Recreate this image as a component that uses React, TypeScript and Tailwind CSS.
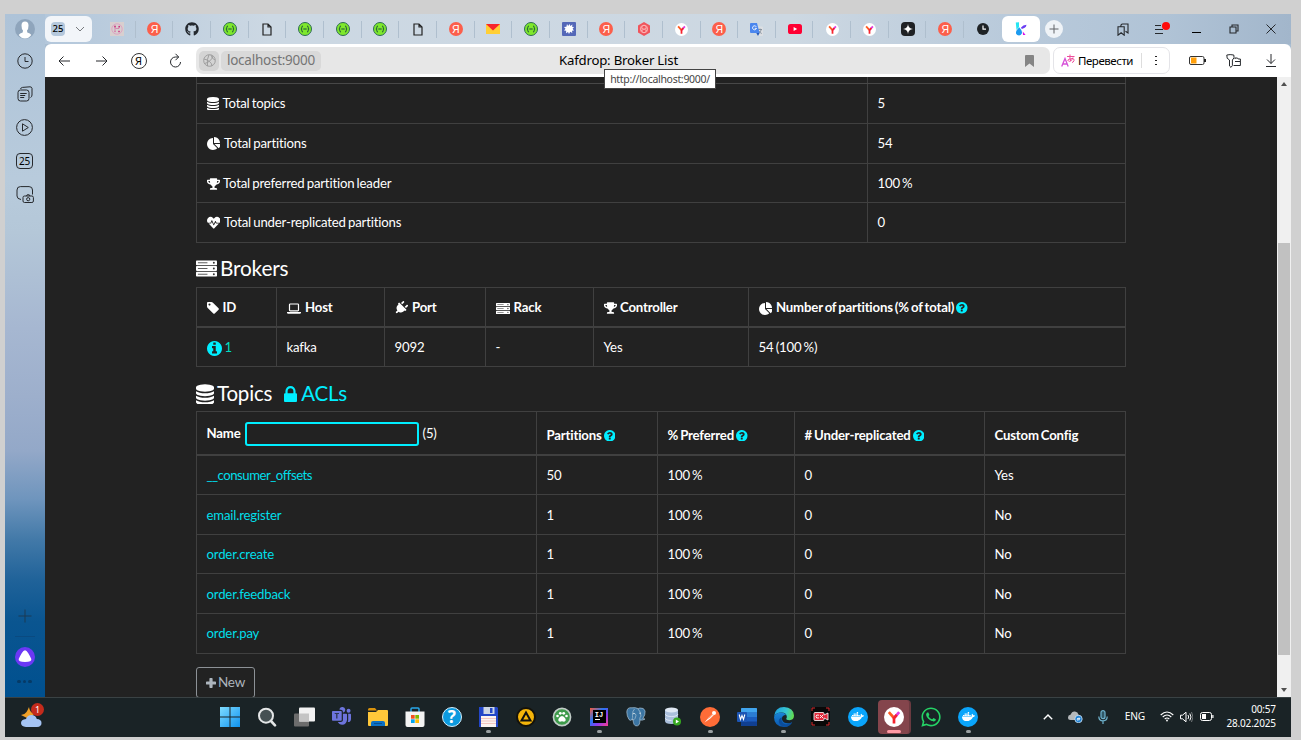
import React from "react";
import { FaGithub, FaWhatsapp, FaDocker, FaTrophy, FaHeartbeat, FaPlug } from "react-icons/fa";
import { BsMicrosoftTeams } from "react-icons/bs";

type Kids = { children?: React.ReactNode };

/* ---------- glyphs used inside the page ---------- */

const Glyph = ({ d, box, cls }: { d: string; box: string; cls: string }) => (
  <svg viewBox={box} className={`inline-block shrink-0 fill-current ${cls}`}>
    <path d={d} />
  </svg>
);

const DB =
  "M768 768q237 0 443-43t325-127v170q0 69-103 128t-280 93.5-385 34.5-385-34.5-280-93.5-103-128v-170q119 84 325 127t443 43zM768 1536q237 0 443-43t325-127v170q0 69-103 128t-280 93.5-385 34.5-385-34.5-280-93.5-103-128v-170q119 84 325 127t443 43zM768 1152q237 0 443-43t325-127v170q0 69-103 128t-280 93.5-385 34.5-385-34.5-280-93.5-103-128v-170q119 84 325 127t443 43zM768 0q208 0 385 34.5t280 93.5 103 128v128q0 69-103 128t-280 93.5-385 34.5-385-34.5-280-93.5-103-128v-128q0-69 103-128t280-93.5 385-34.5z";
const PIE =
  "M768 890l546 546q-106 108-247.5 168t-298.5 60q-209 0-385.5-103t-279.5-279.5-103-385.5 103-385.5 279.5-279.5 385.5-103v762zM955 896h773q0 157-60 298.5t-168 247.5zM1664 768h-768v-768q209 0 385.5 103t279.5 279.5 103 385.5z";
const TAG =
  "M448 448q0-53-37.5-90.5t-90.5-37.5-90.5 37.5-37.5 90.5 37.5 90.5 90.5 37.5 90.5-37.5 37.5-90.5zM1515 1024q0 53-37 90l-491 492q-39 37-91 37-53 0-90-37l-715-716q-38-37-64.5-101t-26.5-117v-416q0-52 38-90t90-38h416q53 0 117 26.5t102 64.5l715 714q37 39 37 91z";
const INFO =
  "M1024 1376v-160q0-14-9-23t-23-9h-96v-512q0-14-9-23t-23-9h-320q-14 0-23 9t-9 23v160q0 14 9 23t23 9h96v320h-96q-14 0-23 9t-9 23v160q0 14 9 23t23 9h448q14 0 23-9t9-23zM896 480v-160q0-14-9-23t-23-9h-192q-14 0-23 9t-9 23v160q0 14 9 23t23 9h192q14 0 23-9t9-23zM1536 896q0 209-103 385.5t-279.5 279.5-385.5 103-385.5-103-279.5-279.5-103-385.5 103-385.5 279.5-279.5 385.5-103 385.5 103 279.5 279.5 103 385.5z";
const QUESTION =
  "M896 1376v-192q0-14-9-23t-23-9h-192q-14 0-23 9t-9 23v192q0 14 9 23t23 9h192q14 0 23-9t9-23zM1152 704q0-88-55.5-163t-138.5-116-170-41q-243 0-371 213-15 24 8 42l132 100q7 6 19 6 16 0 25-12 53-68 86-92 34-24 86-24 48 0 85.5 26t37.5 59q0 38-20 61t-68 45q-63 28-115.5 86.5t-52.5 125.5v36q0 14 9 23t23 9h192q14 0 23-9t9-23q0-19 21.5-49.5t54.5-49.5q32-18 49-28.5t46-35 44.5-48 28-60.5 12.5-81zM1536 896q0 209-103 385.5t-279.5 279.5-385.5 103-385.5-103-279.5-279.5-103-385.5 103-385.5 279.5-279.5 385.5-103 385.5 103 279.5 279.5 103 385.5z";
const LOCK =
  "M320 768h512v-192q0-106-75-181t-181-75-181 75-75 181v192zM1152 864v576q0 40-28 68t-68 28h-960q-40 0-68-28t-28-68v-576q0-40 28-68t68-28h32v-192q0-184 132-316t316-132 316 132 132 316v192h32q40 0 68 28t28 68z";

const Database = ({ cls }: { cls: string }) => <Glyph d={DB} box="0 0 1536 1664" cls={cls} />;
const Pie = () => <Glyph d={PIE} box="0 0 1728 1664" cls="w-[13.5px] h-[13px]" />;
const Server = ({ cls }: { cls: string }) => (
  <svg viewBox="0 0 22 17" className={`shrink-0 ${cls}`}>
    {[0, 6, 12].map((y) => (
      <g key={y}>
        <rect x="0" y={y} width="22" height="5" rx="0.8" fill="#fff" />
        <rect x="2" y={y + 2} width="10" height="1" fill="#555" />
        <circle cx="18.7" cy={y + 2.5} r="1" fill="#333" />
      </g>
    ))}
  </svg>
);
const Laptop = () => (
  <svg viewBox="0 0 14 11" className="h-[11px] w-[14px] shrink-0">
    <rect x="2.5" y="1" width="9" height="6.8" rx="0.8" fill="none" stroke="#fff" strokeWidth="1.2" />
    <path d="M0 9h14v.8q-.2.9-1.2.9H1.2Q.2 10.700 0 9.800z" fill="#fff" />
  </svg>
);
const Help = () => <Glyph d={QUESTION} box="0 128 1536 1536" cls="w-[11.5px] h-[11.5px] text-[#00eeff]" />;

/* ---------- tab favicons ---------- */

const Ya = () => (
  <span className="flex size-[14px] items-center justify-center rounded-full bg-[#fc5f4b] font-['Liberation_Sans'] text-[10.5px] leading-none text-white">
    Я
  </span>
);
const Swagger = () => (
  <svg viewBox="0 0 14 14" className="size-[14px]">
    <circle cx="7" cy="7" r="6.500" fill="#7ee82c" stroke="#2f6a56" />
    <path d="M5 4q-1.200 0-1.200 1.200v.8q0 1-.9 1 .9 0 .9 1v.8Q3.800 10 5 10M9 4q1.200 0 1.200 1.200v.8q0 1 .9 1-.9 0-.9 1v.8Q10.200 10 9 10M5.300 7h3.400" fill="none" stroke="#1c4f3b" strokeWidth="1" />
  </svg>
);
const Doc = () => (
  <svg viewBox="0 0 10 13" className="h-[13px] w-[10px]">
    <path d="M1 1h5l3 3v8H1zM6 1v3h3" fill="none" stroke="#222" strokeWidth="1.200" />
  </svg>
);
const YBrowser = ({ cls }: { cls: string }) => (
  <svg viewBox="0 0 20 20" className={cls}>
    <circle cx="10" cy="10" r="10" fill="#fff" />
    <path d="M4.800 5.200L10 11" stroke="#ff5a1f" strokeWidth="2.700" fill="none" />
    <path d="M15.200 5.200L10 11" stroke="#e23be0" strokeWidth="2.700" fill="none" />
    <path d="M12.800 7.900L10 11v5.500" stroke="#f5232d" strokeWidth="2.700" fill="none" />
  </svg>
);
const Mail = () => (
  <svg viewBox="0 0 14 10" className="h-[10px] w-[14px]">
    <rect width="14" height="10" fill="#ffcf35" />
    <path d="M0 0h14L7 6.500z" fill="#f8252b" />
  </svg>
);
const Spark = () => (
  <svg viewBox="0 0 14 14" className="size-[14px]">
    <rect width="14" height="14" rx="1" fill="#5468b8" />
    <path d="M5 2l1.200 2L7.500 2l.8 2 2.200-1.500-.5 2.300 2 .2-1.400 1.700L12 8.500l-2 .2.300 2.300-2.100-1.200L7 12l-1-2.100-2 1.300.2-2.400L2 8.500l1.500-1.700L2 5l2.400-.2z" fill="#fff" />
  </svg>
);
const Hex = () => (
  <svg viewBox="0 0 14 14" className="size-[14px]">
    <path d="M7 0l6 3.500v7L7 14l-6-3.500v-7z" fill="#f0555c" />
    <path d="M7 3.200a2 2 0 012 2v3.600a2 2 0 01-4 0V5.200a2 2 0 012-2zM3.800 5.500l6.400 3.400M10.200 5.500L3.800 8.900" fill="none" stroke="#ffc4c4" strokeWidth=".6" />
    <circle cx="7" cy="7" r="3.700" fill="none" stroke="#ffc4c4" strokeWidth=".7" />
  </svg>
);
const Translate = () => (
  <svg viewBox="0 0 13 13" className="size-[13px]">
    <path d="M4.500 3.500H12q1 0 1 1V12q0 1-1 1H8z" fill="#dcdfe3" />
    <path d="M8 6.500h4M10 5.500v1M11.300 6.500q-.5 2.500-3 4M9 8q1 2 2.800 2.500" stroke="#7b8794" strokeWidth=".8" fill="none" />
    <path d="M1 0h6l2.600 10H1Q0 10 0 9V1q0-1 1-1z" fill="#4a86ee" />
    <path d="M8 13l1.600-3H6.300z" fill="#2459b8" />
    <path d="M6.300 3.800A2 2 0 106.500 5.300H4.700" stroke="#fff" strokeWidth=".9" fill="none" />
  </svg>
);
const YouTube = () => (
  <svg viewBox="0 0 14 10" className="h-[10px] w-[14px]">
    <rect width="14" height="10" rx="2.600" fill="#ff0033" />
    <path d="M5.600 2.900v4.200L9.200 5z" fill="#fff" />
  </svg>
);
const Star = () => (
  <svg viewBox="0 0 14 14" className="size-[14px]">
    <rect width="14" height="14" rx="4" fill="#1f2124" />
    <path d="M7 2q.3 4.700 5 5-4.700.3-5 5-.3-4.700-5-5 4.700-.3 5-5z" fill="#fff" />
  </svg>
);
const ClockTab = () => (
  <svg viewBox="0 0 12 12" className="size-[12px]">
    <circle cx="6" cy="6" r="6" fill="#1f2326" />
    <path d="M6 2.500V6.200h3" stroke="#fff" strokeWidth="1.200" fill="none" />
  </svg>
);
const Board = () => (
  <svg viewBox="0 0 14 14" className="size-[14px]">
    <rect width="14" height="14" fill="#d8cfcf" />
    <circle cx="7" cy="7" r="5.200" fill="none" stroke="#e090bd" strokeWidth=".7" />
    <path d="M5 4.500v5M5.500 6.500h3.500V5M9 8.500v2" stroke="#d66aa4" strokeWidth=".7" fill="none" />
    <circle cx="5" cy="4.500" r=".9" fill="#c9347f" />
    <circle cx="9.200" cy="4.600" r=".9" fill="#c9347f" />
    <circle cx="5" cy="9.500" r=".7" fill="#d66aa4" />
    <circle cx="9" cy="9.500" r=".8" fill="#c9347f" />
  </svg>
);
const Kafdrop = () => (
  <svg viewBox="0 0 12 14" className="h-[14px] w-[12px]">
    <path d="M.8.500L4 .2 4 5 1.500 8z" fill="#27e6f2" />
    <path d="M4.200 5.200q3.600 3.800 2.600 6.300-.8 1.900-2.800 1.900T1.100 11.400Q.4 9 4.200 5.200z" fill="#1c9bf0" />
    <path d="M11.500 2.800Q11 6 6.800 7L6 5.400Q8 2.900 11.500 2.800z" fill="#6a3df2" />
    <path d="M7.800 9.500l2.800 3.500H8z" fill="#d814e8" />
  </svg>
);

const GH = () => <FaGithub className="size-[14px] text-[#24292f]" />;
const YTab = () => <YBrowser cls="size-[13px]" />;
const tabs = [
  Board, Ya, GH, Swagger, Doc, Swagger, Swagger, Swagger, Doc, Ya, Mail, Swagger, Spark, Ya, Hex, YTab, Ya,
  Translate, YouTube, YTab, YTab, Star, Ya, ClockTab,
];

/* ---------- line icons ---------- */

const Line = ({ box, cls, children, w = "1" }: Kids & { box: string; cls: string; w?: string }) => (
  <svg viewBox={box} className={`shrink-0 ${cls}`} fill="none" stroke="#26292d" strokeWidth={w}>
    {children}
  </svg>
);

const Sidebar = () => (
  <aside className="flex h-[683px] w-10 shrink-0 flex-col items-center bg-[linear-gradient(to_bottom,#aec3d8_0%,#b8cbdc_24%,#b4c7d8_32%,#a6b7d1_46%,#9dafcc_56%,#93a8c8_64%,#6f95bd_71%,#4279a8_77%,#1f6299_83%,#0a5590_89%,#00508f_100%)] pr-px">
    <div className="flex h-[30px] items-center">
      <svg viewBox="0 0 20 20" className="size-5">
        <circle cx="10" cy="10" r="10" fill="#8fa5bc" />
        <path d="M10 2.500q3.500 0 3.500 4 0 3.500-1.500 5l.3 2q3 .8 4 2.500Q13.500 19.500 10 19.500T3.700 16q1-1.700 4-2.500l.3-2q-1.500-1.500-1.500-5 0-4 3.500-4z" fill="#fff" />
      </svg>
    </div>
    <div className="flex flex-col items-center">
      <div className="flex h-[33.4px] items-center">
        <Line box="0 0 16 16" cls="size-4">
          <circle cx="8" cy="8" r="7.200" />
          <path d="M8 4v4.500h3.500" />
        </Line>
      </div>
      <div className="flex h-[33.4px] items-center">
        <Line box="0 0 16 16" cls="size-4">
          <rect x="1" y="4" width="11" height="11" rx="2.500" />
          <path d="M3.200 7.500h6.500M3.200 9.500h5M3.200 11.500h4M3.500 3Q4 1.500 5.500 1.400L13 .8q1.700 0 2 1.500L15 9q-.1 2-1.500 2.500" />
        </Line>
      </div>
      <div className="flex h-[33.4px] items-center">
        <Line box="0 0 17 17" cls="size-[17px]">
          <circle cx="8.500" cy="8.500" r="7.900" />
          <path d="M6.500 4.800v7.400l5.800-3.700z" />
        </Line>
      </div>
      <div className="flex h-[33.4px] items-center">
        <span className="flex h-[15.5px] w-[17px] items-center justify-center rounded-[4px] border border-[#26292d] font-['Noto_Sans'] text-[10px] leading-none tracking-tight text-black">
          25
        </span>
      </div>
      <div className="flex h-[33.4px] items-center">
        <Line box="0 0 18 17" cls="h-[17px] w-[18px]">
          <path d="M5 13.500Q1 13 1 10V4q0-3.400 3.400-3.400h8.700q3.400 0 3.400 3.400v4.500" />
          <rect x="7" y="10" width="10.400" height="6.500" rx="1.500" />
          <path d="M10.500 10l.6-1.200h2.200l.6 1.200" />
          <circle cx="12.200" cy="13.200" r="1.600" />
        </Line>
      </div>
    </div>
    <div className="mt-auto flex flex-col items-center pb-[14px]">
      <Line box="0 0 14 14" cls="size-[14px] opacity-60">
        <path d="M7 .5v13M.5 7h13" />
      </Line>
      <span className="mt-[13px] h-px w-5 bg-[#0a4a80]" />
      <svg viewBox="0 0 20 20" className="mt-[10px] size-5">
        <circle cx="10" cy="10" r="10" fill="#6b38f5" />
        <path d="M10 3.200q1.500 0 3.300 3t3 5.700q.8 3-6.300 3t-6.300-3Q4.900 9.200 6.700 6.200t3.300-3z" fill="#fff" />
      </svg>
      <span className="mt-[13px] flex gap-[2px]">
        {[0, 1, 2].map((i) => (
          <i key={i} className="size-[3.500px] rounded-full bg-[#063a66]" />
        ))}
      </span>
    </div>
  </aside>
);

const TabStrip = () => (
  <div className="flex h-[30px] items-center bg-[linear-gradient(to_right,#b3c7db_0%,#ccd8e3_18%,#cdd8e2_60%,#b9cadb_77%,#b0c3d6_90%,#a2b6cb_100%)]">
    <div className="flex h-[26px] w-[47px] items-center rounded-[6px] bg-[#f2f5f9] pl-[6px]">
      <span className="flex size-[14px] items-center justify-center rounded-[4px] bg-[#b5c8dc] font-['Noto_Sans'] text-[9.500px] leading-none font-medium text-black">25</span>
      <Line box="0 0 10 6" cls="ml-[10px] h-[6px] w-[10px] opacity-60">
        <path d="M1 1l4 4 4-4" />
      </Line>
    </div>
    <div className="ml-[6px] flex">
      {tabs.map((Icon, i) => (
        <div key={i} className="relative flex h-[17px] w-[37.660px] items-center justify-center">
          <Icon />
          {i < 23 && <span className="absolute right-0 h-[17px] w-px bg-[#afbfce]" />}
        </div>
      ))}
    </div>
    <div className="flex h-[26px] w-[38px] items-center justify-center rounded-[6px] bg-white">
      <Kafdrop />
    </div>
    <div className="ml-[5px] flex size-[18px] items-center justify-center rounded-full bg-[#eff3f7]">
      <Line box="0 0 10 10" cls="size-[10px] opacity-70">
        <path d="M5 .5v9M.5 5h9" />
      </Line>
    </div>
    <div className="ml-[54px] flex items-center">
      <Line box="0 0 12 13" cls="h-[13px] w-[12px]" w="1.100">
        <path d="M1 3.800h6.200v8.400L4.100 9.700 1 12.200zM3.800 3.500q0-2.500 1.700-2.500H11v9L8.500 8.200" />
      </Line>
      <span className="relative ml-[26px] flex h-[14px] w-[16px] flex-col justify-center gap-[3px]">
        <i className="h-px w-[6px] bg-[#26292d]" />
        <i className="h-px w-[8px] bg-[#26292d]" />
        <i className="h-px w-[8px] bg-[#26292d]" />
        <i className="absolute top-0 right-px size-[8px] rounded-full bg-[#ff0a0a]" />
      </span>
      <i className="mt-[7px] ml-[21px] h-px w-[9px] bg-black" />
      <Line box="0 0 10 10" cls="ml-[28px] size-[10px]" w="1.100">
        <path d="M1 3h6v6H1zM3 3V1h6v6H7" />
      </Line>
      <Line box="0 0 10 10" cls="ml-[27px] size-[10px]">
        <path d="M.5.5l9 9M9.500.5l-9 9" />
      </Line>
    </div>
  </div>
);

const NavBar = () => (
  <div className="flex h-[33px] items-center rounded-t-[6px] bg-white font-['Noto_Sans',sans-serif]">
    <div className="flex w-[151px] items-center">
      <span className="flex w-[38px] justify-center">
        <Line box="0 0 12 10" cls="h-[10px] w-[12px]">
          <path d="M12 5H1M5.500.5L1 5l4.500 4.500" />
        </Line>
      </span>
      <span className="flex w-[37px] justify-center">
        <Line box="0 0 12 10" cls="h-[10px] w-[12px]">
          <path d="M0 5h11M6.500.5L11 5 6.500 9.500" />
        </Line>
      </span>
      <span className="flex w-[37px] justify-center">
        <span className="flex size-4 items-center justify-center rounded-full border border-[#333] font-['Noto_Sans'] text-[11px] leading-none text-black">Я</span>
      </span>
      <span className="flex w-[37px] justify-center">
        <Line box="0 0 13 15" cls="h-[15px] w-[13px]">
          <path d="M9.500 4H6.500A5 5 0 1011.500 9M6.500.8L9.700 4 6.500 7.200" />
        </Line>
      </span>
    </div>
    <div className="flex h-[27px] w-[854px] items-center rounded-[7px] bg-[#e7e7e7] pl-[3px]">
      <span className="flex size-5 items-center justify-center rounded-[5px] bg-[#d4d4d4]">
        <svg viewBox="0 0 13 13" className="size-[13px]" fill="none" stroke="#999" strokeWidth=".9">
          <circle cx="6.500" cy="6.500" r="5.800" />
          <path d="M1 5q3 .5 5.500 2.500T9 12M6 .8Q3.500 5 4.500 12M1.500 9.500Q8 8 10 2M8 1q1 4 4 5" />
        </svg>
      </span>
      <span className="ml-[2px] flex h-5 w-[100px] items-center justify-center rounded-[5px] bg-[#d9d9d9] text-[13.500px] leading-none tracking-[-0.25px] text-[#757575]">
        localhost:9000
      </span>
      <span className="ml-[236px] w-[123px] text-center text-[13.200px] leading-none tracking-[-0.2px] whitespace-nowrap text-black">Kafdrop: Broker List</span>
      <svg viewBox="0 0 9 12" className="ml-[345px] h-3 w-[9px]">
        <path d="M0 1q0-1 1-1h7q1 0 1 1v11L4.500 8.500 0 12z" fill="#858585" />
      </svg>
    </div>
    <div className="ml-[3px] flex h-[27px] w-[117px] items-center rounded-[7px] border border-[#e4e4e8] pl-[7px]">
      <svg viewBox="0 0 14 13" className="h-[13px] w-[14px]" fill="none">
        <path d="M.7 12.500L4 4.500l3.200 8M1.900 10h4.300" stroke="#d650d8" strokeWidth="1.300" />
        <path d="M6 2.500h7.500M9 .5Q8.500 5 9.800 7M12 3.500Q10 8.500 7.500 7t4-2.500q2.200.5 1.500 2.200T11 8.500" stroke="#ee4d9b" strokeWidth="1" />
      </svg>
      <span className="ml-[3px] w-[55px] text-[11.500px] leading-none tracking-[-0.45px] whitespace-nowrap text-black">Перевести</span>
      <i className="ml-[8px] h-[15px] w-px bg-[#ddd]" />
      <span className="ml-[13px] flex flex-col gap-[2.500px]">
        <i className="size-[1.500px] bg-[#222]" />
        <i className="size-[1.500px] bg-[#222]" />
        <i className="size-[1.500px] bg-[#222]" />
      </span>
    </div>
    <svg viewBox="0 0 17 9" className="ml-[19px] h-[9px] w-[17px]">
      <rect x=".5" y=".5" width="14.500" height="8" rx="1.500" fill="#fff" stroke="#333" />
      <rect x="2" y="1.500" width="5.500" height="6" fill="#ff9f0a" />
      <path d="M15 3h2v3h-2z" fill="#222" />
    </svg>
    <Line box="0 0 15 14" cls="ml-[20px] h-[14px] w-[15px]">
      <path d="M.8 1Q4 .2 7.800 1q1.200 3-1.400 5v5.500L5 13.400 3.500 12V6Q.2 5 .8 1zM9 5V4h2.500l.7 1h2.200v6.500H7.500M9 7.500h5" />
    </Line>
    <Line box="0 0 10 13" cls="ml-[25px] h-[13px] w-[10px]">
      <path d="M5 0v9.500M1 5.500l4 4 4-4M0 12.500h10" />
    </Line>
  </div>
);

/* ---------- page ---------- */

const Cell = ({ children, w, cls = "" }: Kids & { w: string; cls?: string }) => (
  <div className={`flex items-center border-r border-[#404040] pl-[9.500px] ${w} ${cls}`}>{children}</div>
);

const summary = [
  { h: "h-[40px]", pad: "", icon: <Database cls="h-[13px] w-[12px]" />, gap: "ml-[4px]", label: "Total topics", value: "5" },
  { h: "h-[40px]", pad: "", icon: <Pie />, gap: "ml-[4px]", label: "Total partitions", value: "54" },
  { h: "h-[39px]", pad: "pt-[2px]", icon: <FaTrophy className="h-[12px] w-[13px]" />, gap: "ml-[3.5px]", label: "Total preferred partition leader", value: "100 %" },
  { h: "h-[40px]", pad: "pt-px", icon: <FaHeartbeat className="size-[13.500px]" />, gap: "ml-[4px]", label: "Total under-replicated partitions", value: "0" },
];

const topics = [
  { h: "h-[39px]", pad: "pt-[2px]", name: "__consumer_offsets", track: "tracking-[-0.5px]", n: "50", custom: "Yes" },
  { h: "h-[40px]", pad: "pt-[2px]", name: "email.register", track: "", n: "1", custom: "No" },
  { h: "h-[39px]", pad: "pt-[2px]", name: "order.create", track: "", n: "1", custom: "No" },
  { h: "h-[40px]", pad: "pt-[2px]", name: "order.feedback", track: "", n: "1", custom: "No" },
  { h: "h-[40px]", pad: "", name: "order.pay", track: "", n: "1", custom: "No" },
];

const Page = () => (
  <div className="flex h-[620px] justify-between overflow-hidden bg-[#222] font-['Lato',sans-serif] text-[13.200px] leading-none tracking-[-0.18px] text-white [font-variant-ligatures:none] [word-spacing:-1px]">
    <main className="ml-[151px] w-[930px] shrink-0">
      <section className="border-l border-[#404040]">
        <div className="flex h-[7px] border-b border-[#484848]">
          <Cell w="w-[671px]" />
          <Cell w="w-[258px]" />
        </div>
        {summary.map((r) => (
          <div key={r.label} className={`flex border-b border-[#404040] ${r.h}`}>
            <Cell w="w-[671px]" cls={r.pad}>
              {r.icon}
              <span className={r.gap}>{r.label}</span>
            </Cell>
            <Cell w="w-[258px]" cls={r.pad}>{r.value}</Cell>
          </div>
        ))}
      </section>

      <h2 className="flex h-[44px] items-center pt-[7px] text-[20.800px]">
        <Server cls="h-[17px] w-[21px]" />
        <span className="ml-[3px]">Brokers</span>
      </h2>
      <section className="border-t border-l border-[#404040]">
        <div className="flex h-[40px] border-b-2 border-[#404040] font-bold">
          <Cell w="w-[80px]" cls="pt-[2px]"><Glyph d={TAG} box="0 128 1536 1536" cls="size-[12px]" /><span className="ml-[4px]">ID</span></Cell>
          <Cell w="w-[108px]" cls="pt-[2px]"><Laptop /><span className="ml-[4.500px]">Host</span></Cell>
          <Cell w="w-[101px]" cls="pt-[2px]"><FaPlug className="h-[14px] w-[12px] rotate-45" /><span className="ml-[5.500px]">Port</span></Cell>
          <Cell w="w-[108px]" cls="pt-[2px]"><Server cls="h-[11px] w-[14px]" /><span className="ml-[4px]">Rack</span></Cell>
          <Cell w="w-[155px]" cls="pt-[2px]"><FaTrophy className="h-[12px] w-[13px]" /><span className="ml-[3.500px]">Controller</span></Cell>
          <Cell w="w-[377px]" cls="pt-[2px]"><Pie /><span className="mr-[2px] ml-[4px]">Number of partitions (% of total)</span><Help /></Cell>
        </div>
        <div className="flex h-[39px] border-b border-[#404040]">
          <Cell w="w-[80px]" cls="pt-[2px] text-[#00eeff]"><Glyph d={INFO} box="0 128 1536 1536" cls="size-[15px]" /><span className="ml-[3px] text-[#00dbc0]">1</span></Cell>
          <Cell w="w-[108px]" cls="pt-[2px]">kafka</Cell>
          <Cell w="w-[101px]" cls="pt-[2px]">9092</Cell>
          <Cell w="w-[108px]" cls="pt-[2px]">-</Cell>
          <Cell w="w-[155px]" cls="pt-[2px]">Yes</Cell>
          <Cell w="w-[377px]" cls="pt-[2px]">54 (100 %)</Cell>
        </div>
      </section>

      <h2 className="flex h-[44px] items-center pt-[9px] text-[20.500px]">
        <Database cls="h-[20px] w-[18px]" />
        <span className="ml-[3px]">Topics</span>
        <span className="ml-[12px] flex items-center text-[#00eeff]">
          <Glyph d={LOCK} box="0 128 1152 1408" cls="h-[16px] w-[13px]" />
          <span className="ml-[4px]">ACLs</span>
        </span>
      </h2>
      <section className="border-t border-l border-[#404040]">
        <div className="flex h-[44px] border-b-2 border-[#404040] font-bold">
          <Cell w="w-[340px]" cls="pt-px">
            <span>Name</span>
            <input className="ml-[4px] h-[24px] w-[174px] rounded-[3px] border-2 border-[#00eeff] bg-[#222] outline-none" />
            <span className="ml-[4px] font-normal">(5)</span>
          </Cell>
          <Cell w="w-[121px]" cls="pt-[5px]"><span className="mr-[2px]">Partitions</span><Help /></Cell>
          <Cell w="w-[137px]" cls="pt-[5px]"><span className="mr-[2px]">% Preferred</span><Help /></Cell>
          <Cell w="w-[190px]" cls="pt-[5px]"><span className="mr-[2px]"># Under-replicated</span><Help /></Cell>
          <Cell w="w-[141px]" cls="pt-[5px]">Custom Config</Cell>
        </div>
        {topics.map((t) => (
          <div key={t.name} className={`flex border-b border-[#404040] ${t.h}`}>
            <Cell w="w-[340px]" cls={`text-[#00dfea] ${t.pad} ${t.track}`}>{t.name}</Cell>
            <Cell w="w-[121px]" cls={t.pad}>{t.n}</Cell>
            <Cell w="w-[137px]" cls={t.pad}>100 %</Cell>
            <Cell w="w-[190px]" cls={t.pad}>0</Cell>
            <Cell w="w-[141px]" cls={t.pad}>{t.custom}</Cell>
          </div>
        ))}
      </section>
      <button className="mt-[13px] flex h-[31px] w-[59px] items-center justify-center gap-[2px] rounded-[3px] border border-[#8c9196] text-[13.500px] text-[#adb5bd]">
        <svg viewBox="0 0 10 10" className="size-[10px] fill-current">
          <path d="M3.400.700q0-.7.700-.7h1.800q.7 0 .7.700v2.700h2.700q.7 0 .7.700v1.800q0 .7-.7.700H6.600v2.700q0 .7-.7.700H4.100q-.7 0-.7-.7V6.600H.7q-.7 0-.7-.7V4.100q0-.7.700-.7h2.700z" />
        </svg>
        New
      </button>
    </main>
    <div className="flex h-full w-[14px] shrink-0 flex-col items-center bg-[#f0f0f0] py-[5px]">
      <svg viewBox="0 0 6 4" className="h-1 w-[6px]"><path d="M3 0l3 4H0z" fill="#505050" /></svg>
      <div className="mt-[157px] h-[412px] w-[12px] bg-[#c1c1c1]" />
      <svg viewBox="0 0 6 4" className="mt-auto h-1 w-[6px]"><path d="M3 4l3-4H0z" fill="#505050" /></svg>
    </div>
  </div>
);

/* ---------- taskbar ---------- */

const Docker = () => (
  <span className="flex size-5 items-center justify-center rounded-full bg-[#0aa5fb]">
    <FaDocker className="size-[13px] text-white" />
  </span>
);

const apps: { icon: React.ReactNode; dot?: boolean; active?: boolean }[] = [
  {
    icon: (
      <svg viewBox="0 0 20 20" className="size-5">
        <defs>
          <linearGradient id="win" x1="0" y1="0" x2="1" y2="1"><stop offset="0" stopColor="#7fdcff" /><stop offset="1" stopColor="#0f93f0" /></linearGradient>
        </defs>
        <path d="M0 0h9.500v9.500H0zM10.500 0H20v9.500h-9.500zM0 10.500h9.500V20H0zM10.500 10.500H20V20h-9.500z" fill="url(#win)" />
      </svg>
    ),
  },
  {
    icon: (
      <svg viewBox="0 0 20 20" className="size-5" fill="none" stroke="#e4e6e7">
        <circle cx="9" cy="8.700" r="7" fill="#455053" strokeWidth="2" />
        <path d="M14 14l4 4.300" strokeWidth="2.600" strokeLinecap="round" />
      </svg>
    ),
  },
  {
    icon: (
      <svg viewBox="0 0 21 20" className="h-5 w-[21px]">
        <rect y="6.500" width="15" height="13" rx="1" fill="#6c6c6c" />
        <rect x="5" y=".5" width="16" height="14" rx="1" fill="#f2f2f2" />
        <path d="M5 6.500h10v8H5z" fill="#c4c4c4" />
      </svg>
    ),
  },
  { icon: <BsMicrosoftTeams className="size-[19px] text-[#6d74dc]" /> },
  {
    icon: (
      <svg viewBox="0 0 20 18" className="h-[18px] w-5">
        <path d="M0 1.500Q0 0 1.500 0H7l2 2.500H0z" fill="#d9920c" />
        <path d="M0 4h8l2-2h9q1 0 1 1v14q0 1-1 1H1q-1 0-1-1z" fill="#ffc83a" />
        <path d="M3 15q0-2 2-2h10q2 0 2 2v3H3z" fill="#0b70c4" />
        <path d="M6 15h8v1H6z" fill="#0a4d8c" />
      </svg>
    ),
  },
  {
    icon: (
      <svg viewBox="0 0 20 20" className="size-5">
        <path d="M6 5V2q0-1 1-1h6q1 0 1 1v3" stroke="#28a8ea" strokeWidth="1.500" fill="none" />
        <path d="M.5 4.500h19V18q0 2-2 2h-15q-2 0-2-2z" fill="#f3f3f3" />
        <path d="M6 8h3.700v3.700H6z" fill="#f25022" />
        <path d="M10.300 8H14v3.700h-3.700z" fill="#7fba00" />
        <path d="M6 12.300h3.700V16H6z" fill="#00a4ef" />
        <path d="M10.300 12.300H14V16h-3.700z" fill="#ffb900" />
      </svg>
    ),
  },
  {
    icon: (
      <span className="flex size-5 items-center justify-center rounded-full border border-[#d5eefb] bg-[#0d9ade] font-['Noto_Sans'] text-[17px] leading-none font-bold text-white">?</span>
    ),
  },
  {
    dot: true,
    icon: (
      <svg viewBox="0 0 19 20" className="h-5 w-[19px]">
        <path d="M0 0h18l1 1v19H0z" fill="#2346c8" />
        <rect x="4.500" width="11" height="7" fill="#cdd6e4" />
        <rect x="11" y="1" width="2.500" height="5" fill="#2346c8" />
        <rect x="2" y="9" width="15" height="11" fill="#fbf3f0" />
        <path d="M2 11.500h15M2 14h15M2 16.500h15" stroke="#f0b9b4" strokeWidth=".8" />
      </svg>
    ),
  },
  {
    icon: (
      <svg viewBox="0 0 20 20" className="size-5">
        <circle cx="10" cy="10" r="9" fill="#f5b50a" stroke="#15120a" strokeWidth="2" />
        <path d="M10 5.500l4.500 8h-9z" fill="none" stroke="#111" strokeWidth="2" />
      </svg>
    ),
  },
  {
    icon: (
      <svg viewBox="0 0 20 20" className="size-5">
        <circle cx="10" cy="10" r="8.600" fill="#3d9a4a" stroke="#c2ccc8" strokeWidth="1.600" />
        <g fill="#fff">
          <path d="M10 9q2 0 3.300 2.500T12 14.700q-1-.5-2-.5t-2 .5q-2.600-.7-1.300-3.200T10 9z" />
          <circle cx="5.500" cy="9" r="1.300" /><circle cx="8.300" cy="6.300" r="1.400" /><circle cx="11.700" cy="6.300" r="1.400" /><circle cx="14.500" cy="9" r="1.300" />
        </g>
      </svg>
    ),
  },
  {
    dot: true,
    icon: (
      <span className="flex size-[18px] items-center justify-center bg-[linear-gradient(135deg,#fc5a3a,#2476f5_40%,#8a3df0_65%,#fb3d8c)]">
        <span className="flex h-[13px] w-[13px] flex-col bg-black pt-[2px] pl-[2px] font-['Liberation_Mono'] text-[7px] leading-[6px] font-bold text-white">
          IJ
          <i className="mt-[1px] h-px w-[5px] bg-white" />
        </span>
      </span>
    ),
  },
  {
    icon: (
      <svg viewBox="0 0 20 20" className="size-5">
        <path d="M6 .8Q1 0 .8 5q0 4 2.200 7.500 1.500 1.700 3 0l1 .3q.2 2.500 1 4.500 1 2.200 3.500 1.500 2-.6 2.200-3l.3-2.800q3 .6 5-1-1 0-2.200-.3 2.700-4 2.300-7.700Q18 .5 14 1q-1 .2-1.800.6Q9 .2 6 .8z" fill="#3b75a3" stroke="#a9c1d3" strokeWidth=".7" />
        <path d="M6 12.500q1-2 .5-4.200Q6.500 3.500 8.500 2M12 2q2.800 2.500 3 7-1.500 1.500-1.200 4M9 11.500q-1 2-3 1M6.500 7q1.800-1 3 0t-.5 4.500" fill="none" stroke="#a9c1d3" strokeWidth=".7" />
        <circle cx="8" cy="6.500" r=".6" fill="#fff" />
        <circle cx="14" cy="6.200" r=".6" fill="#fff" />
      </svg>
    ),
  },
  {
    icon: (
      <svg viewBox="0 0 16 19" className="h-[19px] w-4">
        <path d="M0 3v11q0 3 6.500 3t6.500-3V3z" fill="#aabfdb" />
        <ellipse cx="6.500" cy="3" rx="6.500" ry="2.500" fill="#dfe8f3" />
        <path d="M0 7q1 2.500 6.500 2.500T13 7M0 11q1 2.500 6.500 2.500" stroke="#e8eff8" strokeWidth=".8" fill="none" />
        <circle cx="12" cy="14.500" r="4" fill="#35a81f" />
        <path d="M10.800 12.500v4l3.200-2z" fill="#fff" />
      </svg>
    ),
  },
  {
    dot: true,
    icon: (
      <svg viewBox="0 0 20 20" className="size-5">
        <circle cx="10" cy="10" r="10" fill="#ff6c37" />
        <path d="M4.500 15.500l4.300-5L12.500 7l1.200 1.200-3.700 3.600z" fill="#fff" />
        <circle cx="14" cy="6" r="2" fill="#fff" />
        <path d="M8.500 11.500l4.500-4.200" stroke="#ff6c37" strokeWidth=".6" />
      </svg>
    ),
  },
  {
    icon: (
      <svg viewBox="0 0 20 18" className="h-[18px] w-5">
        <rect x="4" width="16" height="18" rx="1" fill="#1b5cbe" />
        <path d="M5 0h14q1 0 1 1v3.500H4V1q0-1 1-1z" fill="#41a5ee" />
        <path d="M4 4.500h16V9H4z" fill="#2b7cd3" />
        <path d="M4 13.500h16V17q0 1-1 1H5q-1 0-1-1z" fill="#103f91" />
        <rect y="4" width="10" height="10" rx="1" fill="#1c55b4" />
        <path d="M2.200 6.500L3.500 11.500 5 7.500l1.500 4 1.300-5" stroke="#fff" strokeWidth="1.100" fill="none" />
      </svg>
    ),
  },
  {
    dot: true,
    icon: (
      <svg viewBox="0 0 20 20" className="size-5">
        <defs>
          <linearGradient id="edgeTop" x1="0" y1=".3" x2="1" y2=".5"><stop offset="0" stopColor="#1f9fe0" /><stop offset=".6" stopColor="#36c6d0" /><stop offset="1" stopColor="#62dc50" /></linearGradient>
          <linearGradient id="edgeLow" x1="0" y1="0" x2="0" y2="1"><stop offset="0" stopColor="#1a86d8" /><stop offset="1" stopColor="#0a57b0" /></linearGradient>
        </defs>
        <path d="M0 9.500Q1 0 10 0q9.500.5 10 8.500 0 4.500-4.500 4.700-3.500 0-3.200-1.700.6-.7.500-2Q12.300 5.600 7.500 5.500 2 5.500 0 9.500z" fill="url(#edgeTop)" />
        <path d="M0 10q1.500-4.500 7-4.500 4 .3 5 2.500Q7.500 8 8 12.500q1.500 5 9.500 3.500Q15 20 10 20 0 19.500 0 10z" fill="url(#edgeLow)" />
        <path d="M8 10.500q-1.500 4 2 6.200 4 1.800 8.300-1.900-1.300 3.700-5.800 4.900-6.500.3-7.700-4.700-.3-4 3.200-4.500z" fill="#0b4d9b" />
      </svg>
    ),
  },
  {
    icon: (
      <svg viewBox="0 0 19 19" className="size-[19px]">
        <rect width="19" height="19" rx="2" fill="#080808" />
        <path d="M1 4V1h3M15 1h3v3M18 15v3h-3M4 18H1v-3" stroke="#d5282d" fill="none" />
        <path d="M4 5.500h8q1 0 1 1V8l4-2v7l-4-2v1.500q0 1-1 1H4q-1 0-1-1v-6q0-1 1-1z" fill="#e22b3c" stroke="#fff" strokeWidth=".8" />
        <path d="M8 8.200Q5 7.200 5 9.500t3 1.400M9 8l3 3M12 8l-3 3" stroke="#fff" strokeWidth=".9" fill="none" />
      </svg>
    ),
  },
  { icon: <Docker /> },
  { active: true, icon: <YBrowser cls="size-5" /> },
  { icon: <FaWhatsapp className="size-[22px] text-[#25d366]" /> },
  { dot: true, icon: <Docker /> },
];

const Taskbar = () => (
  <footer className="flex h-[40px] items-center border-t border-[#3a4244] bg-[#1a2326] pb-[2px] font-['Noto_Sans',sans-serif] text-white">
    <div className="flex w-[207px] items-center pl-[16px]">
      <span className="relative flex">
        <svg viewBox="0 0 22 20" className="h-5 w-[22px]">
          <path d="M8 0q.5 5 5 7l-5 5L0 8q4-.5 5.500-3T8 0z" fill="#f0a027" />
          <path d="M5 20q-5-.4-5-4t5-4q1.300-4 5.500-4t5.300 4q4.700.3 4.700 4t-4.500 4z" fill="#a5c4f4" />
        </svg>
        <span className="absolute -top-[4px] right-[-1px] flex size-[13px] items-center justify-center rounded-full bg-[#c42b1c] text-[9px] leading-none">1</span>
      </span>
    </div>
    <div className="flex">
      {apps.map((a, i) => (
        <div key={i} className="relative flex h-[34px] w-[36.900px] items-center justify-center">
          {a.active && <span className="absolute inset-x-[1.500px] inset-y-0 rounded-[4px] border-r-2 border-[#6a3a40] bg-[#84454c]" />}
          <span className="relative flex">{a.icon}</span>
          {a.dot && <i className="absolute bottom-[1px] h-[2.500px] w-[5px] rounded-full bg-[#9aa0a2]" />}
          {a.active && <i className="absolute bottom-[1px] h-[2.500px] w-[14px] rounded-full bg-[#ff9aa5]" />}
        </div>
      ))}
    </div>
    <div className="ml-[56px] flex items-center">
      <svg viewBox="0 0 10 6" className="h-[6px] w-[10px]" fill="none" stroke="#fff" strokeWidth="1.400"><path d="M.8 5.200L5 1l4.200 4.200" /></svg>
      <svg viewBox="0 0 15 12" className="ml-[15px] h-3 w-[15px]">
        <path d="M2.500 9Q0 9 0 6.500t2.500-2.700Q4 0 7 .5t3.500 3.200Q13 4 13 6.500T11 9z" fill="#b5b9bb" />
        <circle cx="10.500" cy="8" r="3.700" fill="#1d7fd1" stroke="#d8e8f5" strokeWidth=".8" />
        <path d="M9 7.500h3l-1-1M12 8.700H9l1 1" stroke="#fff" strokeWidth=".8" fill="none" />
      </svg>
      <svg viewBox="0 0 10 14" className="ml-[15px] h-[14px] w-[10px]" fill="none" stroke="#70b4cf" strokeWidth="1.200">
        <rect x="3" y=".7" width="4" height="8" rx="2" fill="#315867" />
        <path d="M.8 6.500q0 4.300 4.200 4.300t4.200-4.300M5 11v3" />
      </svg>
      <span className="ml-[17px] w-[20px] text-[10.200px] leading-none tracking-[-0.2px]">ENG</span>
      <svg viewBox="0 0 14 11" className="ml-[15px] h-[11px] w-[14px]" fill="none" stroke="#fff" strokeWidth="1.100">
        <path d="M.7 4Q7-2 13.300 4M2.700 6Q7 2 11.300 6M4.700 8Q7 6 9.300 8" />
        <circle cx="7" cy="9.500" r=".9" fill="#fff" stroke="none" />
      </svg>
      <svg viewBox="0 0 13 12" className="ml-[6px] h-3 w-[13px]" fill="none" stroke="#fff">
        <path d="M.5 4.200h2L6 1.200v9.600l-3.500-3h-2zM8 4q1.300 2 0 4M9.800 2.500q2.400 3.500 0 7" />
        <path d="M11.500 1q3 5 0 10" opacity=".4" />
      </svg>
      <svg viewBox="0 0 14 9" className="ml-[7px] h-[9px] w-[14px]">
        <rect x=".5" y=".5" width="11" height="8" rx="2" fill="none" stroke="#fff" />
        <rect x="2" y="2" width="4" height="5" fill="#fff" />
        <path d="M12.300 3h1.200v3h-1.200z" fill="#fff" />
      </svg>
      <span className="ml-[10px] w-[52px] text-right text-[10px] leading-[13.500px] tracking-[-0.200px] whitespace-nowrap">
        00:57
        <br />
        28.02.2025
      </span>
    </div>
  </footer>
);

export default function App() {
  return (
    <div className="h-[740px] w-[1301px] overflow-hidden bg-[#d0d0d0] pt-[14px] pl-[5px]">
      <div className="relative w-[1286px]">
        <div className="flex">
          <Sidebar />
          <div className="flex w-[1246px] flex-col bg-[#a9bdd1]">
            <TabStrip />
            <NavBar />
            <Page />
          </div>
        </div>
        <Taskbar />
        <div className="absolute top-[55px] left-[599px] flex h-[20px] w-[112px] items-center justify-center border border-[#444] bg-white font-['Noto_Sans',sans-serif] text-[10.500px] leading-none tracking-[-0.3px] text-[#444]">
          http://localhost:9000/
        </div>
      </div>
    </div>
  );
}
